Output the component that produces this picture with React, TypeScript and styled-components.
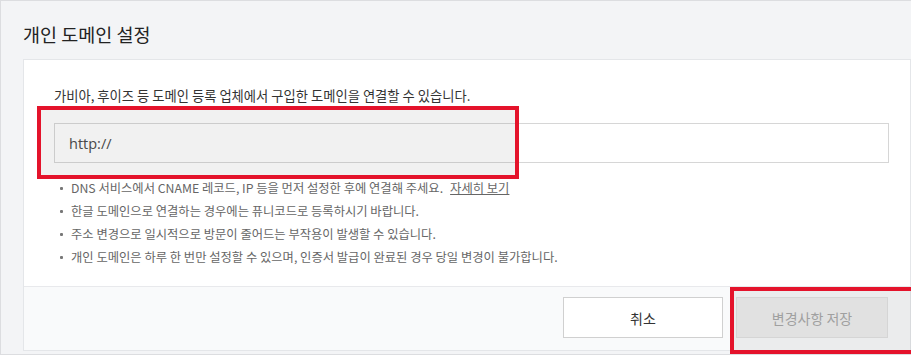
import styled, { createGlobalStyle } from 'styled-components'

const GlobalStyle = createGlobalStyle`
	html, body {
		margin: 0;
		padding: 0;
		background: #f3f4f6;
	}
	* {
		box-sizing: border-box;
	}
	body {
		font-family: 'Noto Sans CJK KR', 'Noto Sans', sans-serif;
	}
`

const Page = styled.div`
	position: relative;
	width: 911px;
	height: 355px;
	background: #f3f4f6;
	border: 1px solid #dcdde0;
	border-right: none;
	overflow: hidden;
	display: flex;
	flex-direction: column;
`

const Title = styled.h2`
	margin: 0;
	height: 58px;
	padding: 8px 0 0 22px;
	display: flex;
	align-items: center;
	font-size: 18.5px;
	font-weight: 400;
	color: #222;
`

const Card = styled.section`
	margin-left: 22px;
	width: 888px;
	height: 292px;
	background: #fff;
	border: 1px solid #e4e6e9;
	display: flex;
	flex-direction: column;
`

const Body = styled.div`
	height: 226px;
	padding: 27px 21px 0 30px;
`

const Lead = styled.p`
	margin: 0 0 18px;
	font-size: 13.3px;
	color: #333;
	line-height: 18px;
`

const Input = styled.input`
	display: block;
	width: 835px;
	height: 40px;
	border: 1px solid #d6d6d6;
	background: #fff;
	padding: 0 14px;
	font-family: 'Open Sans', 'Noto Sans CJK KR', sans-serif;
	font-size: 14.5px;
	color: #444;
	outline: none;
	&::placeholder {
		color: #444;
	}
`

const Notes = styled.ul`
	margin: 16px 0 0;
	padding: 0;
	list-style: none;
	display: flex;
	flex-direction: column;
	gap: 5px;
`

const Note = styled.li`
	position: relative;
	padding-left: 17px;
	font-size: 12.3px;
	line-height: 18px;
	color: #666;
	&::before {
		content: '';
		position: absolute;
		left: 6px;
		top: 8px;
		width: 3px;
		height: 3px;
		border-radius: 1px;
		background: #777;
	}
`

const More = styled.a`
	margin-left: 7px;
	color: #666;
	text-decoration: underline;
	cursor: pointer;
`

const Footer = styled.footer`
	flex: 1;
	border-top: 1px solid #e8e9ec;
	background: #f9fafb;
	display: flex;
	justify-content: flex-end;
	align-items: center;
	gap: 13px;
	padding-right: 22px;
	padding-bottom: 2px;
`

type ButtonProps = {
	$disabled?: boolean
}

const Button = styled.button<ButtonProps>`
	width: ${({ $disabled }) => ($disabled ? '152px' : '160px')};
	height: 41px;
	border: 1px solid ${({ $disabled }) => ($disabled ? '#e0e0e0' : '#d0d0d0')};
	background: ${({ $disabled }) => ($disabled ? '#eeeeee' : '#fff')};
	color: ${({ $disabled }) => ($disabled ? '#a5a5a5' : '#333')};
	font-family: 'Noto Sans CJK KR', sans-serif;
	font-size: 14px;
	cursor: ${({ $disabled }) => ($disabled ? 'default' : 'pointer')};
`

type MarkProps = {
	$x: number
	$y: number
	$w: number
	$h: number
}

// red annotation boxes drawn over the screenshot
const Mark = styled.div<MarkProps>`
	position: absolute;
	left: ${({ $x }) => $x}px;
	top: ${({ $y }) => $y}px;
	width: ${({ $w }) => $w}px;
	height: ${({ $h }) => $h}px;
	border: 4px solid #e4132b;
	background: rgba(120, 120, 120, 0.1);
	pointer-events: none;
`

const App = () => {
	return (
		<>
			<GlobalStyle />
			<Page>
				<Title>개인 도메인 설정</Title>
				<Card>
					<Body>
						<Lead>가비아, 후이즈 등 도메인 등록 업체에서 구입한 도메인을 연결할 수 있습니다.</Lead>
						<Input placeholder={'http://'} />
						<Notes>
							<Note>
								DNS 서비스에서 CNAME 레코드, IP 등을 먼저 설정한 후에 연결해 주세요.
								<More>자세히 보기</More>
							</Note>
							<Note>한글 도메인으로 연결하는 경우에는 퓨니코드로 등록하시기 바랍니다.</Note>
							<Note>주소 변경으로 일시적으로 방문이 줄어드는 부작용이 발생할 수 있습니다.</Note>
							<Note>개인 도메인은 하루 한 번만 설정할 수 있으며, 인증서 발급이 완료된 경우 당일 변경이 불가합니다.</Note>
						</Notes>
					</Body>
					<Footer>
						<Button>취소</Button>
						<Button $disabled>변경사항 저장</Button>
					</Footer>
				</Card>
				<Mark $x={36} $y={105} $w={482} $h={73} />
				<Mark $x={729} $y={286} $w={190} $h={67} />
			</Page>
		</>
	)
}

export default App
